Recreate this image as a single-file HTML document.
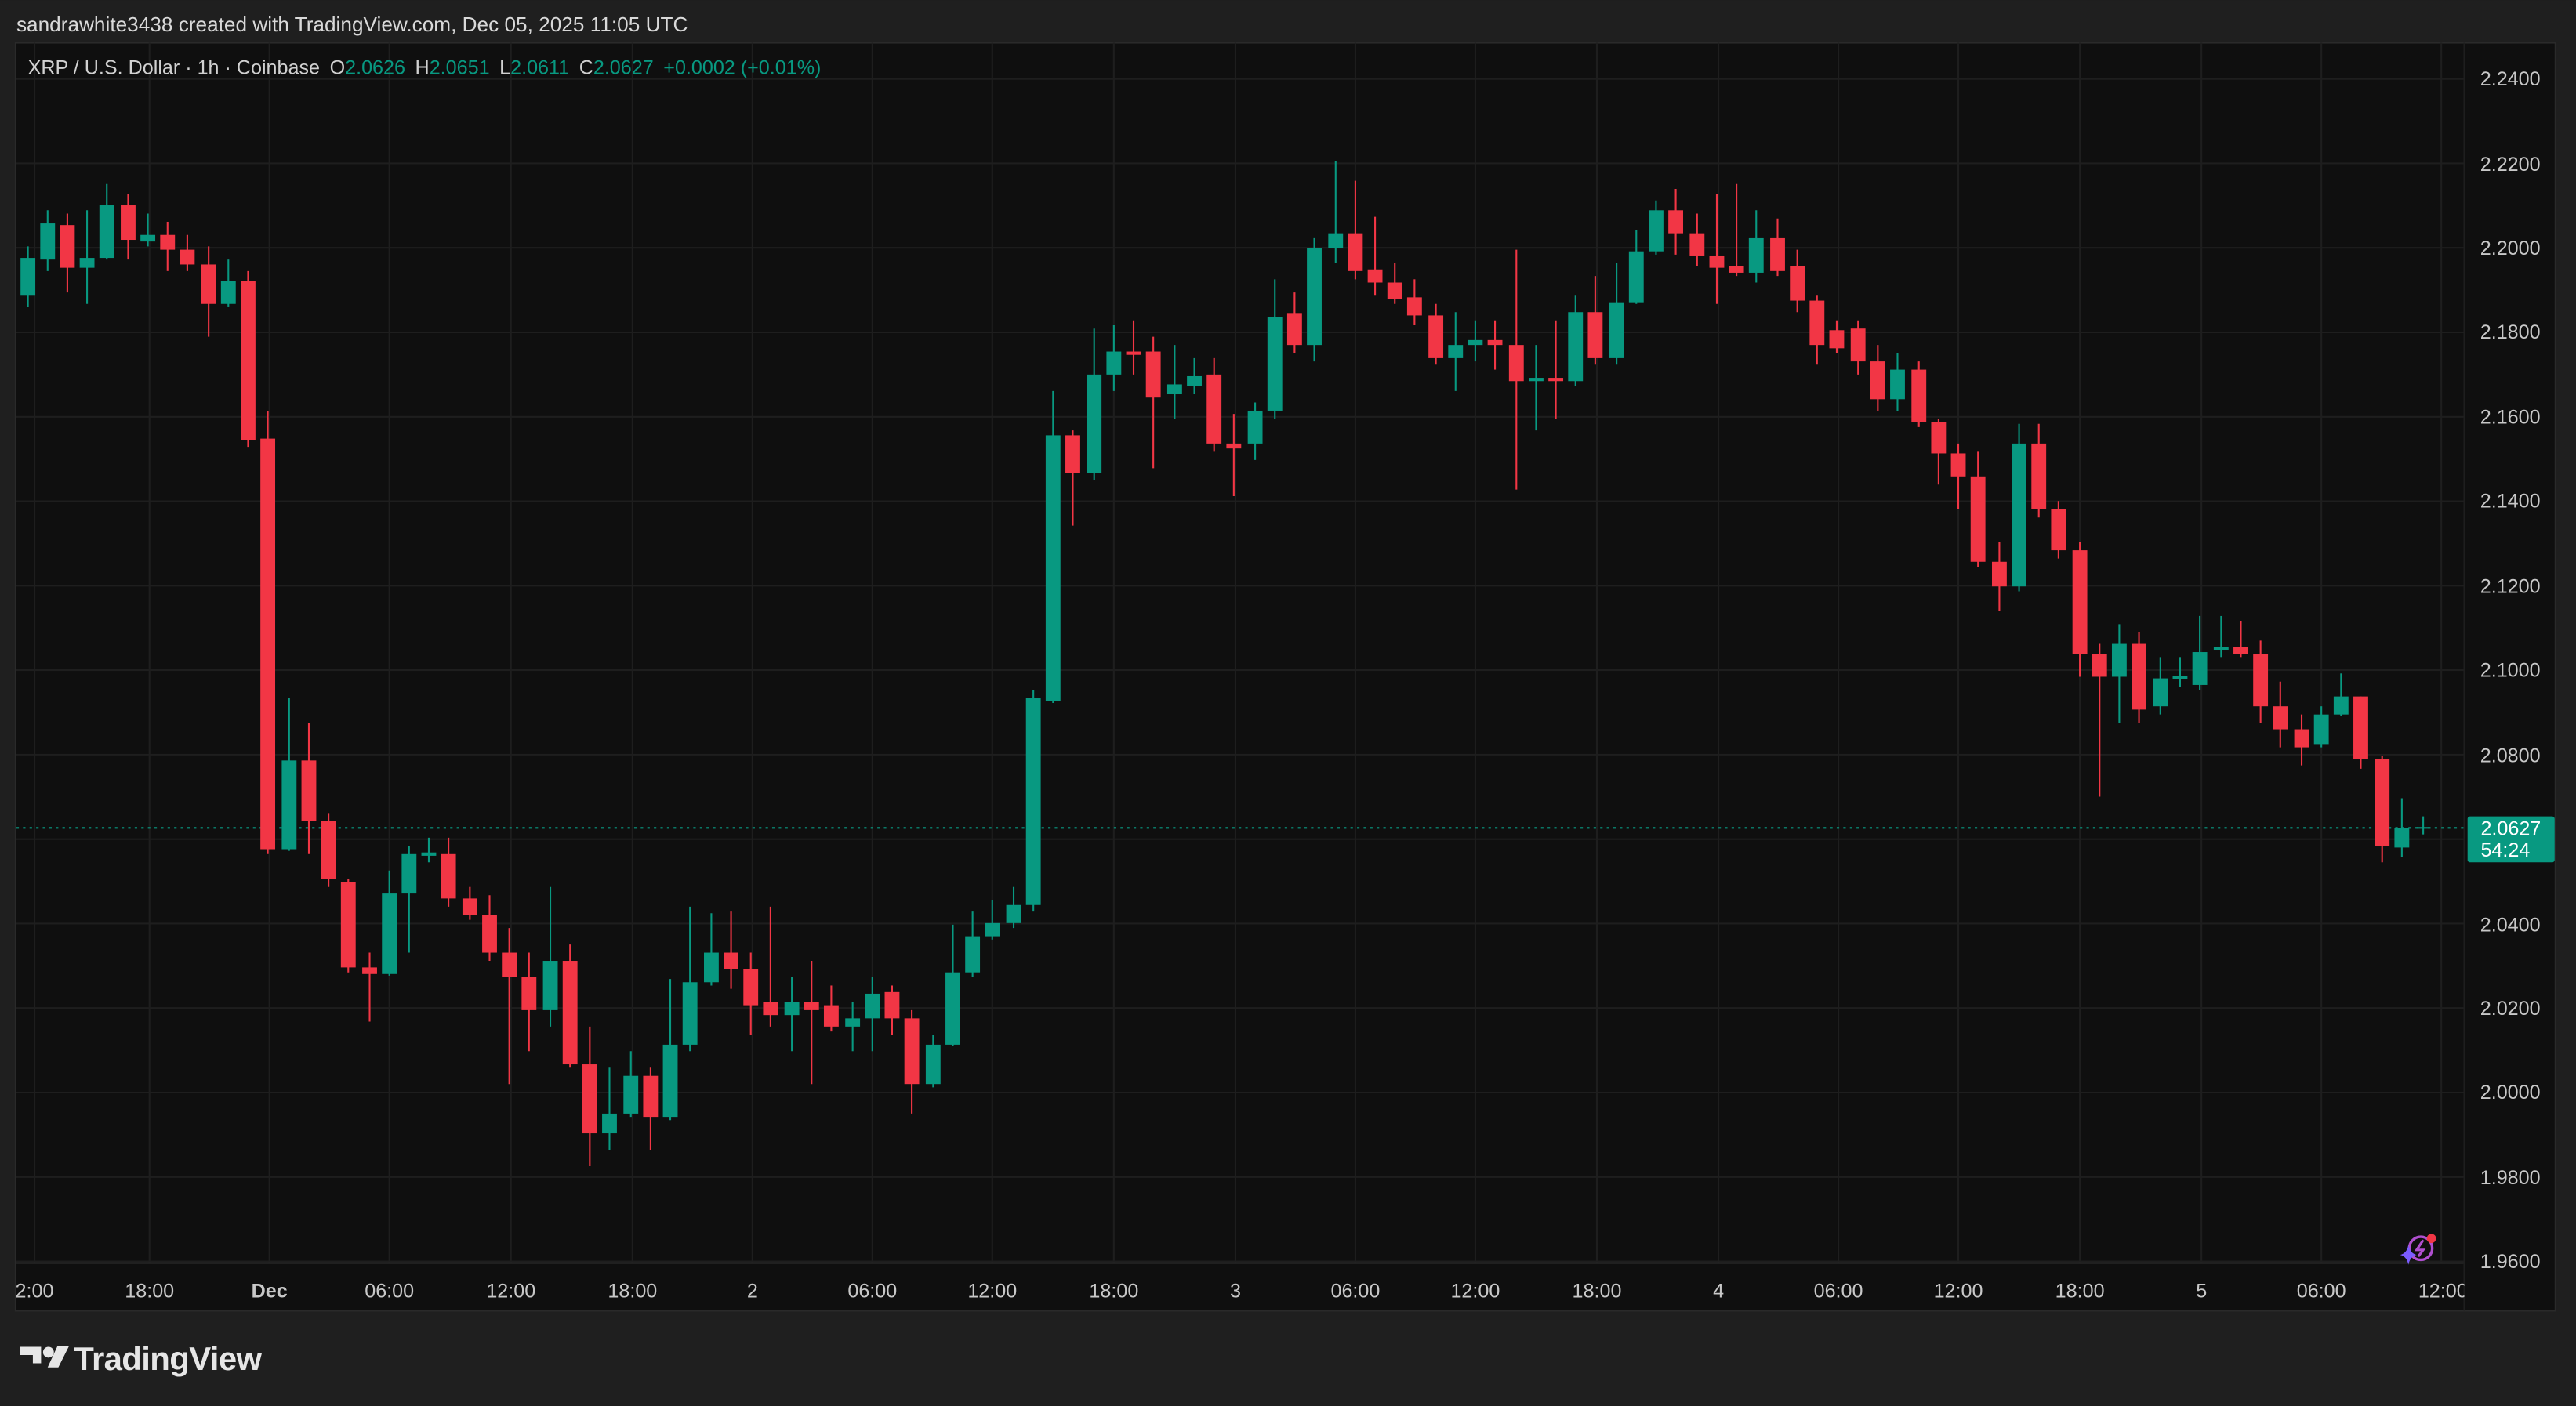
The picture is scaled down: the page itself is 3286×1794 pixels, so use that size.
<!DOCTYPE html>
<html><head><meta charset="utf-8"><style>
html,body{margin:0;padding:0;background:#1f1f1f;}
svg{display:block}
text{font-family:"Liberation Sans",sans-serif;}
</style></head><body>
<svg id="c" width="3286" height="1794" viewBox="0 0 1568 856" xmlns="http://www.w3.org/2000/svg">
<rect x="0" y="0" width="1568" height="856" fill="#1f1f1f"/>
<text x="10" y="19" font-size="12.5" fill="#d9d9d9">sandrawhite3438 created with TradingView.com, Dec 05, 2025 11:05 UTC</text>
<rect x="9.5" y="26" width="1546" height="772" fill="#0f0f0f" stroke="#2a2a2a" stroke-width="1"/>
<g id="grid" stroke="#1e1e1e" stroke-width="1"></g>
<line x1="10" y1="769" x2="1500" y2="769" stroke="#2a2a2a"/>
<line x1="1500" y1="26" x2="1500" y2="798" stroke="#1e1e1e"/>
<line x1="10" y1="504" x2="1500" y2="504" stroke="#089981" stroke-dasharray="1.5 2.5" stroke-width="1"/>
<g id="candles"></g>
<text x="17" y="45" font-size="12" fill="#d1d1d1">XRP / U.S. Dollar · 1h · Coinbase<tspan dx="6">O</tspan><tspan fill="#089981">2.0626</tspan><tspan dx="6">H</tspan><tspan fill="#089981">2.0651</tspan><tspan dx="6">L</tspan><tspan fill="#089981">2.0611</tspan><tspan dx="6">C</tspan><tspan fill="#089981">2.0627</tspan><tspan dx="6" fill="#089981">+0.0002 (+0.01%)</tspan></text>
<g font-size="12" fill="#c8c8c8" text-anchor="middle">
<text x="1528" y="52">2.2400</text><text x="1528" y="104">2.2200</text><text x="1528" y="155">2.2000</text><text x="1528" y="206">2.1800</text><text x="1528" y="258">2.1600</text><text x="1528" y="309">2.1400</text><text x="1528" y="361">2.1200</text><text x="1528" y="412">2.1000</text><text x="1528" y="464">2.0800</text><text x="1528" y="567">2.0400</text><text x="1528" y="618">2.0200</text><text x="1528" y="669">2.0000</text><text x="1528" y="721">1.9800</text><text x="1528" y="772">1.9600</text>
</g>
<rect x="1502" y="497" width="53" height="28" rx="1.5" fill="#089981"/>
<text x="1510" y="508.5" font-size="12" fill="#ffffff">2.0627</text>
<text x="1510" y="521.5" font-size="12" fill="#ffffff">54:24</text>
<g font-size="12" fill="#c8c8c8" text-anchor="middle">
<text x="21" y="790">2:00</text><text x="91" y="790">18:00</text><text x="164" y="790" font-weight="bold">Dec</text><text x="237" y="790">06:00</text><text x="311" y="790">12:00</text><text x="385" y="790">18:00</text><text x="458" y="790">2</text><text x="531" y="790">06:00</text><text x="604" y="790">12:00</text><text x="678" y="790">18:00</text><text x="752" y="790">3</text><text x="825" y="790">06:00</text><text x="898" y="790">12:00</text><text x="972" y="790">18:00</text><text x="1046" y="790">4</text><text x="1119" y="790">06:00</text><text x="1192" y="790">12:00</text><text x="1266" y="790">18:00</text><text x="1340" y="790">5</text><text x="1413" y="790">06:00</text>
</g>
<svg x="1470" y="770" width="30" height="26" viewBox="0 0 30 26"><text x="17" y="20" font-size="12" fill="#c8c8c8" text-anchor="middle">12:00</text></svg>
<circle cx="1473.5" cy="760" r="7" fill="none" stroke="#b04fd0" stroke-width="1.6"/>
<path d="M1475 755 L1471 761 L1475 761 L1472 765" fill="none" stroke="#b04fd0" stroke-width="1.5"/>
<path d="M1466 758 Q1467 763 1471 764 Q1467 765 1466 770 Q1465 765 1461 764 Q1465 763 1466 758Z" fill="#7b5cff"/>
<circle cx="1480" cy="754" r="2.8" fill="#f23645"/>
<g fill="#e6e6e6">
<path d="M12 820 H25 V830 H20 V825 H12Z"/>
<circle cx="29.5" cy="823.3" r="3.3"/>
<path d="M35 819.5 H42 L35.5 832.5 H29Z"/>
</g>
<text x="45" y="834" font-size="20" font-weight="bold" fill="#e6e6e6" letter-spacing="-0.3">TradingView</text>
</svg>
<script>
var d=[
[17,180,157,150,187],[29,158,136,128,165],[41,137,163,130,178],[53,163,157,128,185],[65,157,125,112,158],[78,125,146,118,158],[90,147,143,130,150],[102,143,152,135,165],[114,152,161,143,165],[127,161,185,150,205],[139,185,171,158,187],[151,171,268,165,272],[163,267,517,250,520],[176,517,463,425,518],[188,463,500,440,520],[200,500,535,495,540],[212,537,589,535,592],[225,589,593,580,622],[237,593,544,530,594],[249,544,520,515,580],[261,521,519,510,525],[273,520,547,510,552],[286,547,557,540,560],[298,557,580,545,585],[310,580,595,565,660],[322,595,615,580,640],[335,615,585,540,625],[347,585,648,575,650],[359,648,690,625,710],[371,690,678,650,700],[384,678,655,640,680],[396,655,680,650,700],[408,680,636,596,682],[420,636,598,552,640],[433,598,580,556,600],[445,580,590,555,602],[457,590,612,580,630],[469,610,618,552,625],[482,618,610,595,640],[494,610,615,585,660],[506,612,625,600,628],[519,625,620,610,640],[531,620,605,595,640],[543,604,620,600,630],[555,620,660,615,678],[568,660,636,630,662],[580,636,592,563,637],[592,592,570,555,595],[604,570,562,548,572],[617,562,551,540,565],[629,551,425,420,555],[641,427,265,238,428],[653,265,288,262,320],[666,288,228,200,292],[678,228,214,198,238],[690,214,216,195,228],[702,214,242,205,285],[715,240,234,210,255],[727,235,229,218,240],[739,228,270,218,275],[751,270,273,252,302],[764,270,250,245,280],[776,250,193,170,255],[788,191,210,178,215],[800,210,151,145,220],[813,151,142,98,160],[825,142,165,110,170],[837,164,172,132,180],[849,172,182,160,185],[861,181,192,170,198],[874,192,218,185,222],[886,218,210,190,238],[898,210,207,195,220],[910,207,210,195,225],[923,210,232,152,298],[935,232,230,210,262],[947,230,232,195,255],[959,232,190,180,235],[971,190,218,168,222],[984,218,184,160,222],[996,184,153,140,185],[1008,153,128,122,155],[1020,128,142,115,155],[1033,142,156,130,162],[1045,156,163,118,185],[1057,162,166,112,168],[1069,166,145,128,172],[1082,145,165,133,168],[1094,162,183,152,190],[1106,183,210,180,222],[1118,201,212,195,215],[1131,200,220,195,228],[1143,220,243,210,250],[1155,243,225,215,250],[1168,225,257,220,260],[1180,257,276,255,295],[1192,276,290,270,310],[1204,290,342,275,345],[1217,342,357,330,372],[1229,357,270,258,360],[1241,270,310,258,315],[1253,310,335,305,340],[1266,335,398,330,412],[1278,398,412,392,485],[1290,412,392,380,440],[1302,392,432,385,440],[1315,430,413,400,435],[1327,413,412,400,418],[1339,417,397,375,420],[1352,396,394,375,400],[1364,394,398,378,400],[1376,398,430,390,440],[1388,430,444,415,455],[1401,444,455,435,466],[1413,453,435,430,455],[1425,435,424,410,436],[1437,424,462,424,468],[1450,462,515,460,525],[1462,516,504,486,522],[1475,504,504,497,508]];
var g=document.getElementById("candles"),h="";
d.forEach(function(c){var up=c[2]<=c[1],col=up?"#089981":"#f23645";var t=Math.min(c[1],c[2]),b=Math.max(c[1],c[2]);if(b-t<1.2){t-=0.6;b+=0.6;}
h+='<line x1="'+c[0]+'" x2="'+c[0]+'" y1="'+c[3]+'" y2="'+c[4]+'" stroke="'+col+'" stroke-width="1"/>';
if(c[0]==1475){h+='<line x1="1471" x2="1479" y1="504" y2="504" stroke="'+col+'" stroke-width="1"/>';}else
h+='<rect x="'+(c[0]-4.5)+'" y="'+t+'" width="9" height="'+(b-t)+'" fill="'+col+'"/>';});
g.innerHTML=h;
var gr="",xs=[21,91,164,237,311,385,458,531,604,678,752,825,898,972,1046,1119,1192,1266,1340,1413,1486];
xs.forEach(function(x){gr+='<line x1="'+x+'" x2="'+x+'" y1="26" y2="769"/>';});
for(var i=0;i<15;i++){var y=48+i*51.43;gr+='<line x1="10" x2="1500" y1="'+y+'" y2="'+y+'"/>';}
document.getElementById("grid").innerHTML=gr;
</script>
</body></html>
